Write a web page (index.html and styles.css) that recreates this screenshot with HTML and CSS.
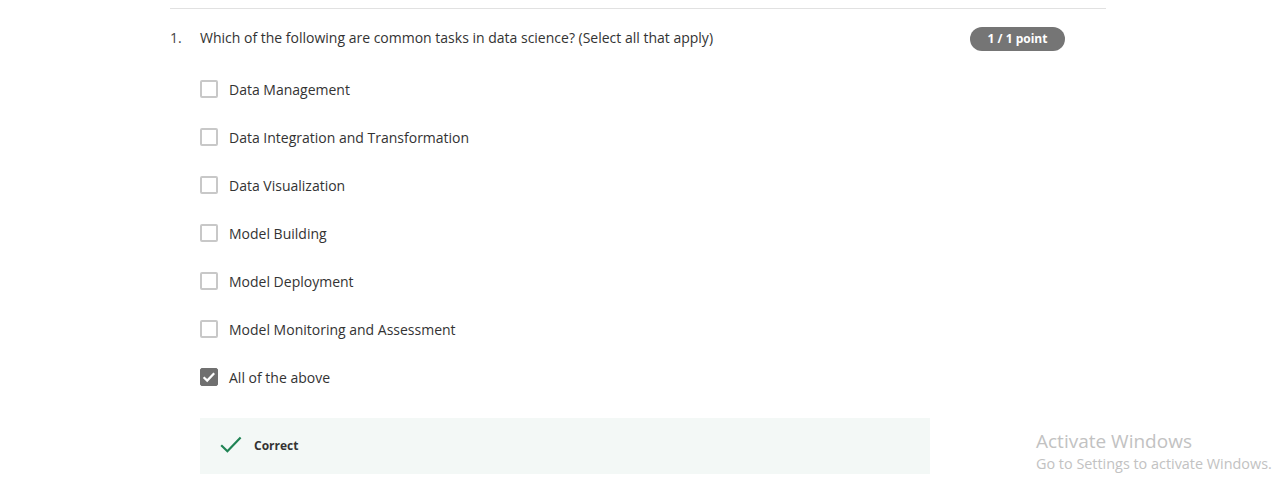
FILE: index.html
```html
<!DOCTYPE html>
<html lang="en">
<head>
<meta charset="utf-8">
<title>Quiz</title>
<link rel="stylesheet" href="styles.css">
</head>
<body>
<div class="page">
  <div class="question">
    <div class="q-head">
      <span class="q-num">1.</span>
      <span class="q-text">Which of the following are common tasks in data science? (Select all that apply)</span>
      <span class="badge">1 / 1 point</span>
    </div>
    <ul class="options">
      <li class="option"><span class="box"></span><span class="label">Data Management</span></li>
      <li class="option"><span class="box"></span><span class="label">Data Integration and Transformation</span></li>
      <li class="option"><span class="box"></span><span class="label">Data Visualization</span></li>
      <li class="option"><span class="box"></span><span class="label">Model Building</span></li>
      <li class="option"><span class="box"></span><span class="label">Model Deployment</span></li>
      <li class="option"><span class="box"></span><span class="label">Model Monitoring and Assessment</span></li>
      <li class="option"><span class="box checked"><svg width="16" height="16" viewBox="0 0 16 16"><path d="M2.6 8.2 L6.2 11.6 L13.2 4.2" fill="none" stroke="#fff" stroke-width="2.2"/></svg></span><span class="label">All of the above</span></li>
    </ul>
    <div class="feedback">
      <svg class="ok" width="22" height="18" viewBox="0 0 22 18"><path d="M1.2 9.2 L7.4 15.2 L20.6 1.4" fill="none" stroke="#1f8354" stroke-width="2.2"/></svg>
      <span class="fb-text">Correct</span>
    </div>
  </div>
</div>
<div class="activate">
  <div class="act-title">Activate Windows</div>
  <div class="act-sub">Go to Settings to activate Windows.</div>
</div>
</body>
</html>
```
FILE: styles.css
```css
html, body {
  margin: 0;
  padding: 0;
  background: #fff;
}
body {
  font-family: "Open Sans", "Noto Sans", sans-serif;
  color: #333;
  width: 1284px;
  height: 486px;
  overflow: hidden;
  position: relative;
}
.page {
  padding-top: 8px;
  margin-left: 170px;
  width: 936px;
}
.question {
  border-top: 1px solid #e1e1e1;
  padding-top: 17px;
}
.q-head {
  display: flex;
  align-items: center;
  height: 24px;
  font-size: 14px;
  line-height: 20px;
}
.q-num {
  width: 30px;
  color: #444;
}
.q-text {
  flex: 1;
  color: #333;
}
.badge {
  margin-right: 41px;
  width: 95px;
  height: 24px;
  border-radius: 12px;
  background: #757575;
  color: #fff;
  font-size: 12px;
  font-weight: 700;
  display: flex;
  align-items: center;
  justify-content: center;
  margin-top: 2px;
}
.options {
  list-style: none;
  margin: 15px 0 0 30px;
  padding: 0;
}
.option {
  display: flex;
  align-items: center;
  height: 48px;
  font-size: 14px;
}
.box {
  box-sizing: border-box;
  width: 18px;
  height: 18px;
  border: 2px solid #c8c8c8;
  border-radius: 2px;
  display: flex;
  align-items: center;
  justify-content: center;
  margin-right: 11px;
}
.box.checked {
  background: #707070;
  border-color: #707070;
  border-width: 1px;
}
.label {
  color: #333;
}
.feedback {
  margin: 17px 0 0 30px;
  width: 730px;
  height: 56px;
  background: #f3f8f6;
  display: flex;
  align-items: center;
  box-sizing: border-box;
  padding: 0 0 2px 20px;
}
.ok {
  margin-right: 12px;
}
.fb-text {
  font-size: 12px;
  font-weight: 700;
  color: #333;
}
.activate {
  position: absolute;
  left: 1036px;
  top: 429px;
  color: #c2c2c2;
  font-family: "Open Sans", "Noto Sans", sans-serif;
}
.act-title {
  font-size: 19px;
  line-height: 25px;
}
.act-sub {
  font-size: 14.4px;
  line-height: 20px;
}
```
